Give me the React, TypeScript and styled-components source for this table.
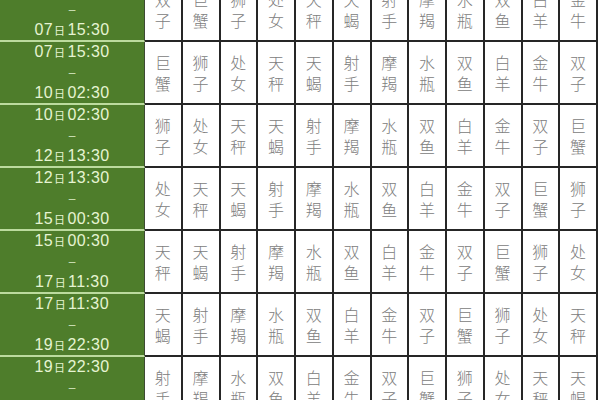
import React from "react"
import styled, { createGlobalStyle } from "styled-components"

const GlobalStyle = createGlobalStyle`
  html, body {
    margin: 0;
    padding: 0;
    background: #ffffff;
    overflow: hidden;
  }
  body {
    width: 600px;
    height: 400px;
  }
`

const signs = ["白羊", "金牛", "双子", "巨蟹", "狮子", "处女", "天秤", "天蝎", "射手", "摩羯", "水瓶", "双鱼"]

const times = [
  [["05", "04:30"], ["07", "15:30"]],
  [["07", "15:30"], ["10", "02:30"]],
  [["10", "02:30"], ["12", "13:30"]],
  [["12", "13:30"], ["15", "00:30"]],
  [["15", "00:30"], ["17", "11:30"]],
  [["17", "11:30"], ["19", "22:30"]],
  [["19", "22:30"], ["22", "09:30"]],
]

const Page = styled.div`
  width: 600px;
  height: 400px;
  overflow: hidden;
`

const Table = styled.div`
  width: 598px;
  margin-top: -21px;
  display: grid;
  grid-template-columns: 145px repeat(12, 1fr);
  grid-auto-rows: 63px;
`

const TimeCell = styled.div`
  background: #4e7d2b;
  border-bottom: 2px solid #bcdb9e;
  border-right: 1px solid #3d4a33;
  display: flex;
  flex-direction: column;
  align-items: center;
  justify-content: center;
  color: #e6f4d2;
  font-family: "Liberation Sans", Arial, sans-serif;
  font-size: 16px;
  padding-top: 1px;
`

const TimeLine = styled.span`
  display: block;
  height: 20.5px;
  line-height: 20.5px;
  letter-spacing: 0.4px;
  white-space: nowrap;
`

const Day = styled.span`
  font-family: "Noto Sans CJK SC", sans-serif;
  font-size: 11px;
  margin: 0 2px 0 1px;
`

const Dash = styled.span`
  display: block;
  height: 20.5px;
  line-height: 20.5px;
  font-size: 12px;
  opacity: 0.85;
`

const SignCell = styled.div`
  background: #ffffff;
  border-right: 2px solid #262626;
  border-bottom: 2px solid #262626;
  display: flex;
  flex-direction: column;
  align-items: center;
  justify-content: center;
  color: #808080;
  font-family: "Noto Sans CJK SC", "Noto Sans", sans-serif;
  font-weight: 300;
  font-size: 16px;
  padding-top: 1px;
`

const Char = styled.span`
  display: block;
  height: 21px;
  line-height: 21px;
`

function Time({ t }: { t: string[] }) {
  return (
    <TimeLine>
      {t[0]}
      <Day>日</Day>
      {t[1]}
    </TimeLine>
  )
}

export default function App() {
  return (
    <Page>
      <GlobalStyle />
      <Table>
        {times.map((t, r) => (
          <React.Fragment key={r}>
            <TimeCell>
              <Time t={t[0]} />
              <Dash>–</Dash>
              <Time t={t[1]} />
            </TimeCell>
            {signs.map((_, c) => {
              const name = signs[(r + 2 + c) % 12]
              return (
                <SignCell key={c}>
                  <Char>{name[0]}</Char>
                  <Char>{name[1]}</Char>
                </SignCell>
              )
            })}
          </React.Fragment>
        ))}
      </Table>
    </Page>
  )
}
